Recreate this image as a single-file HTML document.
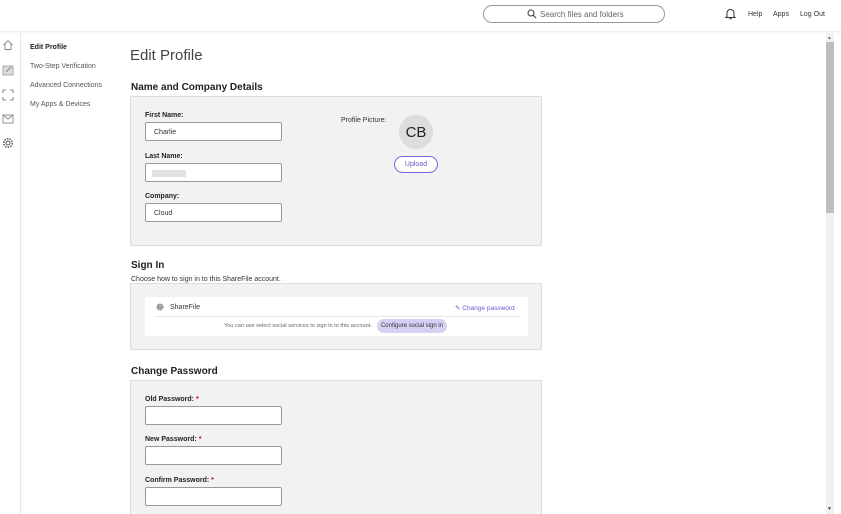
<!DOCTYPE html>
<html style="overflow:hidden;width:841px;height:514px"><head><style>
*{margin:0;padding:0;box-sizing:border-box}
body{width:841px;height:514px;overflow:hidden;background:#fff;font-family:"Liberation Sans",sans-serif;color:#222;position:relative}
.a{position:absolute}
.hdr{left:0;top:0;width:841px;height:32px;background:#fff;border-bottom:1px solid #eee;box-shadow:0 1px 2px rgba(0,0,0,.05)}
.search{left:483px;top:5px;width:182px;height:18px;border:1px solid #999;border-radius:10px;font-size:8px;color:#666;padding:4px 0 0 56px}
.nav{font-size:7px;color:#333}
.rail{left:20px;top:33px;width:1px;height:481px;background:#e6e6e6}
.side{font-size:7px;color:#555}
.lbl{font-size:7px;font-weight:bold;color:#222}
.inp{width:137px;height:19px;border:1px solid #999;border-radius:2px;background:#fff;font-size:7px;padding:6px 8px;color:#333}
.box{background:#f2f2f2;border:1px solid #ddd;left:130px;width:412px}
h2{position:absolute;font-size:10px;font-weight:bold;color:#222}
.req{color:#c00}
</style></head><body>
<div class="a hdr"></div>
<div class="a search" style="padding-top:4px">Search files and folders</div>
<svg class="a" style="left:527px;top:9px" width="10" height="10" viewBox="0 0 10 10"><circle cx="4" cy="4" r="3" fill="none" stroke="#444" stroke-width="1.1"/><path d="M6.2 6.2L9 9" stroke="#444" stroke-width="1.1"/></svg>
<svg class="a" style="left:725px;top:8px" width="11" height="12" viewBox="0 0 11 12"><path d="M2 8.5V5a3.5 3.5 0 0 1 7 0v3.5l1 1H1z" fill="none" stroke="#333" stroke-width="1"/><path d="M4.3 10.8h2.4" stroke="#333"/></svg>
<div class="a nav" style="left:748px;top:11px">Help</div>
<div class="a nav" style="left:773px;top:11px">Apps</div>
<div class="a nav" style="left:800px;top:11px">Log Out</div>
<div class="a rail"></div>
<svg class="a" style="left:2px;top:39px" width="12" height="12" viewBox="0 0 12 12"><path d="M1.5 6L6 1.8 10.5 6M3 5v5.5h6V5" fill="none" stroke="#888" stroke-width=".9"/></svg>
<svg class="a" style="left:2px;top:64px" width="12" height="12" viewBox="0 0 12 12"><rect x="1" y="2" width="10" height="9" fill="#ddd" stroke="#999" stroke-width=".8"/><path d="M4 8l5-5" stroke="#888"/></svg>
<svg class="a" style="left:2px;top:89px" width="12" height="12" viewBox="0 0 12 12"><path d="M1 4V1h3M8 1h3v3M11 8v3H8M4 11H1V8" fill="none" stroke="#888"/></svg>
<svg class="a" style="left:2px;top:114px" width="12" height="10" viewBox="0 0 12 10"><rect x="1" y="1" width="10" height="8" fill="none" stroke="#888" stroke-width=".9"/><path d="M1 1l5 4 5-4" fill="none" stroke="#888" stroke-width=".9"/></svg>
<svg class="a" style="left:2px;top:137px" width="12" height="12" viewBox="0 0 12 12"><circle cx="6" cy="6" r="2" fill="none" stroke="#555"/><circle cx="6" cy="6" r="4.3" fill="none" stroke="#555" stroke-width="1.4" stroke-dasharray="1.6 1.1"/></svg>
<div class="a side" style="left:30px;top:44px;font-weight:bold;color:#222">Edit Profile</div>
<div class="a side" style="left:30px;top:63px">Two-Step Verification</div>
<div class="a side" style="left:30px;top:82px">Advanced Connections</div>
<div class="a side" style="left:30px;top:101px">My Apps &amp; Devices</div>
<div class="a" style="left:130px;top:47px;font-size:15px;color:#444">Edit Profile</div>
<h2 style="left:131px;top:82px">Name and Company Details</h2>
<div class="a box" style="top:96px;height:150px"></div>
<div class="a lbl" style="left:145px;top:112px">First Name:</div>
<div class="a inp" style="left:145px;top:122px">Charlie</div>
<div class="a lbl" style="left:145px;top:153px">Last Name:</div>
<div class="a inp" style="left:145px;top:163px;padding-left:6px"><div style="width:34px;height:7px;background:#e2e2e2"></div></div>
<div class="a lbl" style="left:145px;top:193px">Company:</div>
<div class="a inp" style="left:145px;top:203px">Cloud</div>
<div class="a" style="left:341px;top:117px;font-size:7px;color:#333">Profile Picture:</div>
<div class="a" style="left:399px;top:115px;width:34px;height:34px;border-radius:50%;background:#ddd;font-size:15px;color:#222;text-align:center;line-height:36px">CB</div>
<div class="a" style="left:394px;top:156px;width:44px;height:17px;border:1.5px solid #7a66d6;border-radius:9px;font-size:7px;color:#6a5acd;text-align:center;line-height:15px;background:#fff">Upload</div>
<h2 style="left:131px;top:260px">Sign In</h2>
<div class="a" style="left:131px;top:276px;font-size:7px;color:#333">Choose how to sign in to this ShareFile account.</div>
<div class="a box" style="top:283px;height:67px"></div>
<div class="a" style="left:145px;top:297px;width:383px;height:39px;background:#fff;border-radius:2px"></div>
<div class="a" style="left:155px;top:316px;width:364px;height:1px;background:#e6e6e6"></div>
<svg class="a" style="left:156px;top:303px" width="8" height="8" viewBox="0 0 12 12"><circle cx="6" cy="6" r="2" fill="none" stroke="#555" stroke-width="1.4"/><circle cx="6" cy="6" r="4.3" fill="none" stroke="#555" stroke-width="1.8" stroke-dasharray="1.6 1.1"/></svg>
<div class="a" style="left:170px;top:304px;font-size:7px;color:#333">ShareFile</div>
<div class="a" style="left:455px;top:304px;font-size:6.5px;color:#6a5acd">✎ Change password</div>
<div class="a" style="left:224px;top:323px;font-size:5.6px;color:#666;white-space:nowrap">You can use select social services to sign in to this account.</div>
<div class="a" style="left:377px;top:319px;width:70px;height:14px;border-radius:7px;background:#d6d0f5;font-size:6px;color:#333;text-align:center;line-height:14px">Configure social sign in</div>
<h2 style="left:131px;top:366px">Change Password</h2>
<div class="a box" style="top:380px;height:134px;border-bottom:none"></div>
<div class="a lbl" style="left:145px;top:396px">Old Password: <span class="req">*</span></div>
<div class="a inp" style="left:145px;top:406px"></div>
<div class="a lbl" style="left:145px;top:436px">New Password: <span class="req">*</span></div>
<div class="a inp" style="left:145px;top:446px"></div>
<div class="a lbl" style="left:145px;top:477px">Confirm Password: <span class="req">*</span></div>
<div class="a inp" style="left:145px;top:487px"></div>
<div class="a" style="left:826px;top:33px;width:8px;height:481px;background:#f0f0f0"></div>
<div class="a" style="left:826px;top:42px;width:8px;height:171px;background:#bdbdbd"></div>
<div class="a" style="left:827px;top:35px;font-size:5px;color:#777">▲</div>
<div class="a" style="left:827px;top:506px;font-size:5px;color:#444">▼</div>
</body></html>
